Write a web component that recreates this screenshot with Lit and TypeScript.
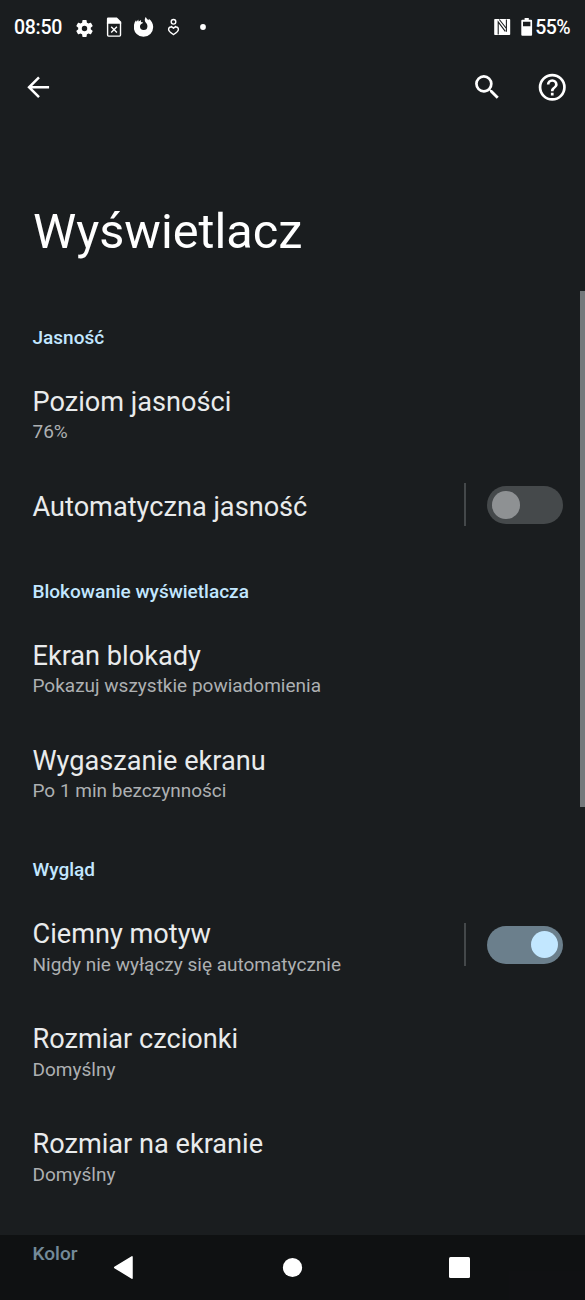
import { LitElement, html, svg, css, nothing } from "lit";
import { customElement, property } from "lit/decorators.js";

interface Item {
  title: string;
  summary?: string;
  toggle?: boolean;
}

interface Section {
  name: string;
  items: Item[];
}

const SECTIONS: Section[] = [
  {
    name: "Jasność",
    items: [
      { title: "Poziom jasności", summary: "76%" },
      { title: "Automatyczna jasność", toggle: false },
    ],
  },
  {
    name: "Blokowanie wyświetlacza",
    items: [
      { title: "Ekran blokady", summary: "Pokazuj wszystkie powiadomienia" },
      { title: "Wygaszanie ekranu", summary: "Po 1 min bezczynności" },
    ],
  },
  {
    name: "Wygląd",
    items: [
      { title: "Ciemny motyw", summary: "Nigdy nie wyłączy się automatycznie", toggle: true },
      { title: "Rozmiar czcionki", summary: "Domyślny" },
      { title: "Rozmiar na ekranie", summary: "Domyślny" },
    ],
  },
  { name: "Kolor", items: [] },
];

@customElement("status-bar")
export class StatusBar extends LitElement {
  static styles = css`
    :host {
      display: flex;
      align-items: center;
      height: 56px;
      padding: 0 15px 0 14px;
      box-sizing: border-box;
      font: 500 19.5px/24px Roboto, sans-serif;
      color: #fff;
    }
    svg { display: block; fill: currentColor; flex: none; }
    .clock { width: 59.5px; letter-spacing: -0.3px; }
    .battery { letter-spacing: -0.6px; }
    .grow { flex: 1; }
  `;
  render() {
    return html`
      <span class="clock">08:50</span>
      <svg width="21" height="21" viewBox="0 0 24 24"><path d="M19.14 12.94c.04-.3.06-.61.06-.94s-.02-.64-.07-.94l2.03-1.58a.49.49 0 0 0 .12-.61l-1.92-3.32a.49.49 0 0 0-.59-.22l-2.39.96a7 7 0 0 0-1.62-.94l-.36-2.54a.48.48 0 0 0-.48-.41h-3.84a.48.48 0 0 0-.47.41l-.36 2.54c-.59.24-1.13.57-1.62.94l-2.39-.96a.48.48 0 0 0-.59.22L2.74 8.87a.48.48 0 0 0 .12.61l2.03 1.58c-.05.3-.09.63-.09.94s.02.64.07.94l-2.03 1.58a.49.49 0 0 0-.12.61l1.92 3.32c.12.22.37.29.59.22l2.39-.96c.5.38 1.03.7 1.62.94l.36 2.54c.05.24.24.41.48.41h3.84c.24 0 .44-.17.47-.41l.36-2.54a7 7 0 0 0 1.62-.94l2.39.96c.22.08.47 0 .59-.22l1.92-3.32a.48.48 0 0 0-.12-.61zM12 15.1a3.1 3.1 0 1 1 0-6.2 3.1 3.1 0 0 1 0 6.2z"/></svg>
      <svg width="39.500" height="24" viewBox="0.5 0.5 39.5 24">
        <path d="M13.600 2h8.800l4.300 4.300v2h-14.300v-5a1.300 1.300 0 0 1 1.200-1.300z"/>
        <path d="M13.100 7v12.600a1 1 0 0 0 1 1h10.900a1 1 0 0 0 1-1v-12.600" fill="none" stroke="currentColor" stroke-width="1.400"/>
        <path d="M16.700 11.200l5.700 5.700m0-5.700l-5.700 5.700" fill="none" stroke="currentColor" stroke-width="1.400"/>
      </svg>
      <svg width="20" height="22" viewBox="0.5 0.5 20 22">
        <path d="M12.400.3c.3 1.600 1.300 2.300 2.600 3.400.3-.5.300-.9.200-1.400 2.700 1.900 4.500 4.800 4.500 8.300a9.700 9.700 0 0 1-19.400 0c0-2.900.8-5 2.200-6.900l.7 1.500 1.500-2.300.5 2 2.400-1.500-.2 2 2.200.7c-.2.900-1.300 1-2.200 1.600-.6.500-.9 1.200-.9 2a3.700 3.700 0 0 0 7.400.3c.1-2-.8-3-1.700-4.100-1.300-1.500-1.300-3.500.2-5.600z"/>
      </svg>
      <svg width="40" height="20" viewBox="0 0.5 40 20">
        <g fill="none" stroke="currentColor" stroke-width="1.400" stroke-linejoin="round" stroke-linecap="round">
          <circle cx="19.500" cy="4.300" r="2.300"/>
          <path d="M19.500 10.700c-1-1.900-4.900-1.700-4.900 1.200 0 1.900 2.700 3.700 4.900 5.200 2.200-1.500 4.900-3.300 4.900-5.200 0-2.900-3.900-3.100-4.900-1.200zM17.200 8.900l2.300 1.800 2.300-1.800"/>
        </g>
      </svg>
      <svg width="20" height="20" viewBox="0 0.5 20 20"><circle cx="9" cy="9.500" r="2.900"/></svg>
      <span class="grow"></span>
      <svg width="27" height="20" viewBox="0 0.5 27 20">
        <rect x=".2" y="1.500" width="16" height="16" rx=".8"/>
        <path d="M4.200 17V4.300L11.300 13.800M12.400 2V14.200M5.300 2L12.400 11" fill="none" stroke="#1a1d1f" stroke-width="1.100"/>
      </svg>
      <svg width="14.500" height="20" viewBox="0 0.5 14.5 20">
        <path fill-rule="evenodd" d="M3.600.6h4.200v1.600h2.300a1 1 0 0 1 1 1v14.100a1 1 0 0 1-1 1h-8.800a1 1 0 0 1-1-1v-14.100a1 1 0 0 1 1-1h2.300zM2 4.200v4.600h7.400v-4.600z"/>
      </svg>
      <span class="battery">55%</span>
    `;
  }
}

@customElement("action-bar")
export class ActionBar extends LitElement {
  static styles = css`
    :host {
      display: flex;
      align-items: center;
      justify-content: space-between;
      height: 62px;
      padding: 0 16.5px 0 21.5px;
      color: #fff;
    }
    .actions { display: flex; gap: 33px; }
    svg { display: block; width: 32.500px; height: 32.500px; fill: currentColor; }
  `;
  render() {
    return html`
      <svg viewBox="0 0 24 24"><path d="M20 11.100H7.500l5.700-5.700L11.900 4l-8 8 8 8 1.300-1.400-5.700-5.700H20z"/></svg>
      <div class="actions">
        <svg viewBox="0 0 24 24"><path d="M15.500 14h-.79l-.28-.27A6.470 6.470 0 0 0 16 9.500 6.500 6.500 0 1 0 9.500 16c1.610 0 3.090-.59 4.230-1.570l.27.28v.79l5 4.990L20.490 19zm-6 0a4.500 4.500 0 1 1 0-9 4.500 4.500 0 0 1 0 9z"/></svg>
        <svg viewBox="0 0 24 24"><path d="M11 18h2v-2h-2zm1-16a10 10 0 1 0 0 20 10 10 0 0 0 0-20zm0 18a8 8 0 1 1 0-16 8 8 0 0 1 0 16zm0-14a4 4 0 0 0-4 4h2a2 2 0 1 1 4 0c0 2-3 1.750-3 5h2c0-2.250 3-2.500 3-5a4 4 0 0 0-4-4z"/></svg>
      </div>
    `;
  }
}

@customElement("toggle-switch")
export class ToggleSwitch extends LitElement {
  @property({ type: Boolean, reflect: true }) checked = false;
  static styles = css`
    :host {
      display: flex;
      align-items: center;
      width: 76px;
      height: 38px;
      padding: 0 5px;
      box-sizing: border-box;
      border-radius: 19px;
      background: #45494b;
    }
    .thumb { width: 27.5px; height: 27.5px; border-radius: 50%; background: #8e9193; }
    :host([checked]) { justify-content: flex-end; background: #6b7f8c; }
    :host([checked]) .thumb { background: #c2e7ff; }
  `;
  render() {
    return html`<span class="thumb"></span>`;
  }
}

@customElement("setting-row")
export class SettingRow extends LitElement {
  @property({ attribute: false }) item!: Item;
  static styles = css`
    :host { display: block; }
    .row { display: flex; align-items: center; height: 105px; padding: 0 22px 0 32.5px; box-sizing: border-box; }
    .single { height: 80.500px; }
    .text { flex: 1; white-space: nowrap; padding-top: 5.5px; }
    .single .text { padding-top: 4.5px; }
    .title { font-size: 27.150px; line-height: 32px; color: #e9ebec; }
    .summary { font-size: 19px; line-height: 24px; padding-top: 2.5px; color: #adb0b2; }
    .rule { width: 2px; height: 43px; margin-right: 21.5px; background: #44484a; }
  `;
  render() {
    const { title, summary, toggle } = this.item;
    return html`
      <div class="row ${summary ? "" : "single"}">
        <div class="text">
          <div class="title">${title}</div>
          ${summary ? html`<div class="summary">${summary}</div>` : nothing}
        </div>
        ${toggle === undefined
          ? nothing
          : html`<span class="rule"></span><toggle-switch ?checked=${toggle}></toggle-switch>`}
      </div>
    `;
  }
}

@customElement("nav-bar")
export class NavBar extends LitElement {
  static styles = css`
    :host { display: block; height: 65px; background: rgba(0, 0, 0, 0.4); }
    svg { display: block; fill: #fff; }
  `;
  render() {
    return html`<svg width="585" height="65" viewBox="0 0 585 65">
      ${svg`<path d="M114.700 32.500L132 21.800V43.200z" stroke="#fff" stroke-width="1.500" stroke-linejoin="round"/>
      <circle cx="292.500" cy="32.500" r="9.600"/>
      <rect x="449" y="22" width="21" height="21" rx="1.500"/>`}
    </svg>`;
  }
}

@customElement("app-root")
export class AppRoot extends LitElement {
  static styles = css`
    :host {
      display: block;
      position: relative;
      height: 1300px;
      overflow: hidden;
      background: #1a1d1f;
      font-family: Roboto, sans-serif;
    }
    .heading {
      margin: 0;
      height: 173px;
      padding: 85px 33px 0;
      box-sizing: border-box;
      font-size: 48.7px;
      font-weight: 400;
      line-height: 58px;
      color: #fff;
    }
    .category {
      height: 68.500px;
      padding: 34.5px 32.5px 0;
      box-sizing: border-box;
      font-size: 19px;
      font-weight: 500;
      line-height: 24px;
      color: #c2e7ff;
    }
    .scrollbar { position: absolute; right: 0; top: 291px; width: 5.5px; height: 516px; background: #74787b; }
    .nav { position: absolute; left: 0; right: 0; bottom: 0; }
  `;
  render() {
    return html`
      <status-bar></status-bar>
      <action-bar></action-bar>
      <h1 class="heading">Wyświetlacz</h1>
      <main>
        ${SECTIONS.map(
          (s) => html`
            <div class="category">${s.name}</div>
            ${s.items.map((i) => html`<setting-row .item=${i}></setting-row>`)}
          `,
        )}
      </main>
      <div class="scrollbar"></div>
      <nav-bar class="nav"></nav-bar>
    `;
  }
}
